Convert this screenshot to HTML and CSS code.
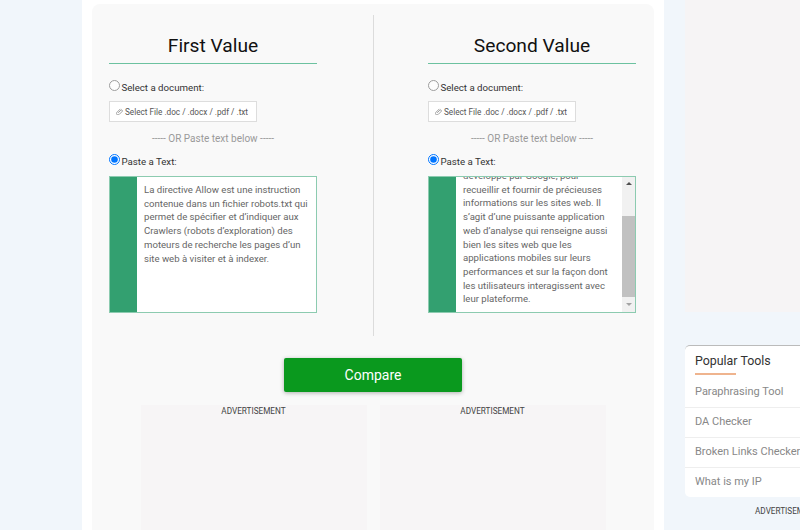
FILE: index.html
```html
<!DOCTYPE html>
<html lang="en">
<head>
    <meta charset="UTF-8">
    <title>Text Compare</title>
    <link rel="stylesheet" href="styles.css">
</head>
<body>
    <div class="page">
        <main class="main-column">
            <div class="compare-card">
                <div class="columns">
                    <section class="value-col">
                        <h2>First Value</h2>
                        <label class="radio-line"><input type="radio" name="first"> Select a document:</label>
                        <div class="file-btn"><svg class="clip" viewBox="0 0 16 16"><path d="M5 11 11 5a2 2 0 0 1 3 3l-7 7a3.5 3.5 0 0 1-5-5l8-8" fill="none" stroke="#777" stroke-width="1.6"/></svg> Select File .doc / .docx / .pdf / .txt</div>
                        <p class="or-line">----- OR Paste text below -----</p>
                        <label class="radio-line"><input type="radio" name="first" checked> Paste a Text:</label>
                        <div class="text-area">
                            <div class="gutter"></div>
                            <div class="text-body">La directive Allow est une instruction contenue dans un fichier robots.txt qui permet de spécifier et d’indiquer aux Crawlers (robots d’exploration) des moteurs de recherche les pages d’un site web à visiter et à indexer.</div>
                        </div>
                    </section>
                    <section class="value-col second">
                        <h2>Second Value</h2>
                        <label class="radio-line"><input type="radio" name="second"> Select a document:</label>
                        <div class="file-btn"><svg class="clip" viewBox="0 0 16 16"><path d="M5 11 11 5a2 2 0 0 1 3 3l-7 7a3.5 3.5 0 0 1-5-5l8-8" fill="none" stroke="#777" stroke-width="1.6"/></svg> Select File .doc / .docx / .pdf / .txt</div>
                        <p class="or-line">----- OR Paste text below -----</p>
                        <label class="radio-line"><input type="radio" name="second" checked> Paste a Text:</label>
                        <div class="text-area">
                            <div class="gutter"></div>
                            <div class="text-body scrolled">
                                <div class="scrolled-inner">développé par Google, pour recueillir et fournir de précieuses informations sur les sites web. Il s’agit d’une puissante application web d’analyse qui renseigne aussi bien les sites web que les applications mobiles sur leurs performances et sur la façon dont les utilisateurs interagissent avec leur plateforme.</div>
                            </div>
                            <div class="scrollbar">
                                <span class="arrow-up"></span>
                                <span class="thumb"></span>
                                <span class="arrow-down"></span>
                            </div>
                        </div>
                    </section>
                </div>
                <button class="compare-btn">Compare</button>
                <div class="ads">
                    <div class="ad-box">ADVERTISEMENT</div>
                    <div class="ad-box">ADVERTISEMENT</div>
                </div>
            </div>
        </main>
        <aside class="side-column">
            <div class="side-ad-top"></div>
            <div class="tools-card">
                <h3>Popular Tools</h3>
                <a>Paraphrasing Tool</a>
                <a>DA Checker</a>
                <a>Broken Links Checker</a>
                <a>What is my IP</a>
            </div>
            <div class="side-ad">ADVERTISEMENT</div>
        </aside>
    </div>
</body>
</html>
```
FILE: styles.css
```css
html, body {
    margin: 0;
    padding: 0;
    height: 530px;
    overflow: hidden;
    background: #f1f6fb;
    font-family: 'Roboto', sans-serif;
    color: #222;
}

.page {
    display: flex;
    height: 530px;
    padding-left: 82px;
}

/* Main column */
.main-column {
    width: 582px;
    flex-shrink: 0;
    background: #fff;
    padding: 4px 10px 0;
    box-sizing: border-box;
}
.compare-card {
    background: #f9f9f9;
    border-radius: 8px 8px 0 0;
    height: 526px;
    padding-top: 11px;
    box-sizing: border-box;
}
.columns {
    display: flex;
    height: 321px;
}
.value-col {
    width: 282px;
    box-sizing: border-box;
    padding: 0 56px 0 17px;
    border-right: 1px solid #dcdcdc;
}
.value-col.second {
    width: 280px;
    padding: 0 18px 0 54px;
    border-right: none;
}
h2 {
    margin: 0 0 16px;
    padding: 19px 0 5px;
    font-size: 19.2px;
    line-height: 24px;
    font-weight: 400;
    text-align: center;
    color: #111;
    border-bottom: 1px solid #6cc2a0;
}
.radio-line {
    display: block;
    font-size: 9.7px;
    line-height: 14px;
    color: #333;
}
.radio-line input {
    margin: 0 -1px 0 0;
    width: 11px;
    height: 11px;
    vertical-align: 0;
}
.radio-line input:not(:checked) {
    opacity: 0.7;
}
.file-btn {
    width: 148px;
    height: 21px;
    margin-top: 6px;
    display: flex;
    align-items: center;
    gap: 2px;
    box-sizing: border-box;
    padding-left: 6px;
    background: #fff;
    border: 1px solid #ddd;
    font-size: 8.2px;
    color: #555;
    white-space: nowrap;
}
.clip {
    width: 7px;
    height: 7px;
}
.or-line {
    margin: 11px 0 9px;
    text-align: center;
    font-size: 10px;
    line-height: 12px;
    color: #999;
}

/* Text box */
.text-area {
    display: flex;
    height: 137px;
    margin-top: 7px;
    box-sizing: border-box;
    background: #fff;
    border: 1px solid #8ccbb0;
    overflow: hidden;
}
.gutter {
    width: 27px;
    flex-shrink: 0;
    background: #33a070;
}
.text-body {
    flex: 1;
    padding: 6px 7px;
    font-size: 9.6px;
    line-height: 13.7px;
    color: #666;
}
.text-body.scrolled {
    padding: 0 0 0 7px;
    overflow: hidden;
}
.scrolled-inner {
    margin-top: -8px;
    padding-right: 8px;
}
.scrollbar {
    width: 13px;
    flex-shrink: 0;
    display: flex;
    flex-direction: column;
    align-items: center;
    background: #f1f1f1;
}
.thumb {
    width: 100%;
    height: 81px;
    background: #c1c1c1;
}
.arrow-up, .arrow-down {
    width: 0;
    height: 0;
    border-left: 3px solid transparent;
    border-right: 3px solid transparent;
}
.arrow-up {
    margin: 5px 0 31px;
    border-bottom: 3px solid #505050;
}
.arrow-down {
    margin-top: 6px;
    border-top: 3px solid #a3a3a3;
}

/* Button */
.compare-btn {
    display: block;
    width: 178px;
    height: 34px;
    margin: 22px auto 0;
    background: #0a991e;
    color: #fff;
    border: none;
    border-radius: 2px;
    font-family: inherit;
    font-size: 14px;
    box-shadow: 0 1px 4px rgba(0, 0, 0, 0.3);
}

/* Ads */
.ads {
    display: flex;
    justify-content: center;
    gap: 13px;
    margin-top: 13px;
}
.ad-box {
    width: 226px;
    height: 130px;
    background: #f7f5f6;
    text-align: center;
    font-size: 8.2px;
    line-height: 13px;
    color: #444;
}

/* Right column */
.side-column {
    margin-left: 21px;
    width: 200px;
    flex-shrink: 0;
}
.side-ad-top {
    height: 312px;
    background: #f6f4f5;
}
.tools-card {
    margin-top: 33px;
    background: #fff;
    border-top: 1px solid #bbb;
    border-radius: 5px;
    height: 152px;
    box-sizing: border-box;
}
.tools-card h3 {
    position: relative;
    margin: 0;
    padding: 7px 10px 0;
    height: 32px;
    box-sizing: border-box;
    font-size: 12.4px;
    line-height: 16px;
    font-weight: 400;
    color: #333;
}
.tools-card h3::after {
    content: "";
    position: absolute;
    left: 10px;
    bottom: 3px;
    width: 41px;
    height: 2px;
    background: #efb48e;
}
.tools-card a {
    display: block;
    height: 30px;
    padding-left: 10px;
    font-size: 11px;
    line-height: 28px;
    color: #888;
    border-bottom: 1px solid #eee;
    box-sizing: border-box;
    white-space: nowrap;
}
.tools-card a:last-child {
    border-bottom: none;
}
.side-ad {
    padding: 8px 0 0 70px;
    font-size: 8.2px;
    line-height: 12px;
    color: #444;
}
```
